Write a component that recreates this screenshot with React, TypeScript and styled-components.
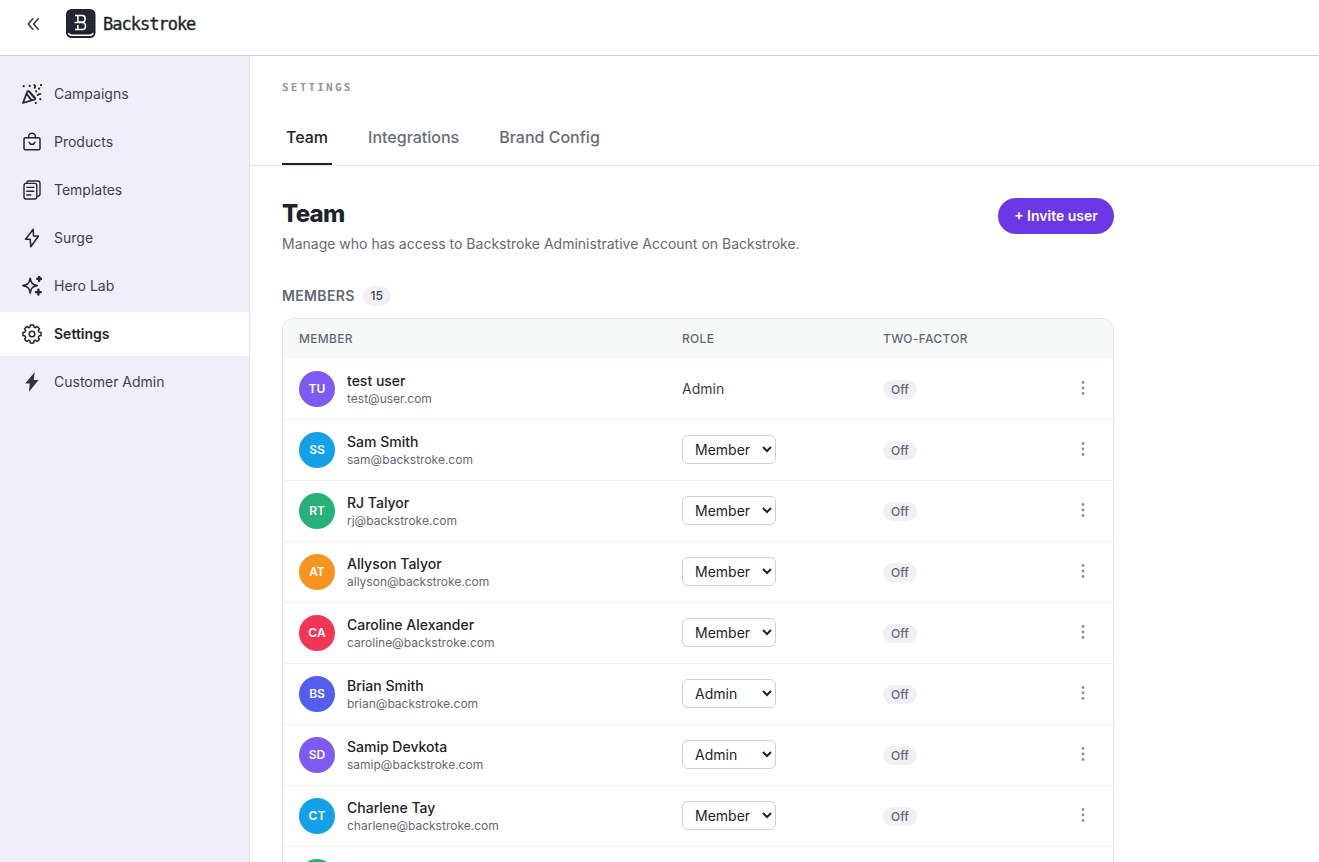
import React from "react";
import styled, { createGlobalStyle, css } from "styled-components";

const GlobalStyle = createGlobalStyle`
  *, *::before, *::after { box-sizing: border-box; }
  body {
    margin: 0;
    background: #fff;
    color: #1f232b;
    font-family: Inter, "Liberation Sans", sans-serif;
    font-size: 14px;
    line-height: 20px;
    -webkit-font-smoothing: antialiased;
  }
`;

const Shell = styled.div`
  display: flex;
  flex-direction: column;
  height: 100vh;
  overflow: hidden;
`;

const TopBar = styled.header`
  display: flex;
  align-items: flex-start;
  flex: none;
  height: 56px;
  padding: 9px 0 0 26px;
  border-bottom: 1px solid #d0d0d2;
`;

const CollapseButton = styled.button`
  display: flex;
  padding: 8px 0 0;
  margin-right: 26px;
  width: 14px;
  border: 0;
  background: none;
  color: #30363f;
`;

const BrandName = styled.span`
  margin-left: 7px;
  font-family: "DejaVu Sans Mono", monospace;
  font-size: 17px;
  line-height: 30px;
  letter-spacing: -1px;
  color: #1f242b;
  -webkit-text-stroke: 0.35px #1f242b;
`;

const Body = styled.div`
  display: flex;
  flex: 1;
  min-height: 0;
`;

const Sidebar = styled.nav`
  display: flex;
  flex-direction: column;
  flex: none;
  gap: 4px;
  width: 250px;
  padding-top: 16px;
  background: #f0eefa;
  border-right: 1px solid #e3e2ea;
`;

const NavItem = styled.a<{ $active?: boolean }>`
  display: flex;
  align-items: center;
  gap: 12px;
  height: 44px;
  padding-left: 22px;
  font-size: 14px;
  color: #3d434d;
  svg { flex: none; color: #23272e; }
  ${(p) =>
    p.$active &&
    css`
      background: #fff;
      color: #1f232b;
      font-weight: 600;
    `}
`;

const Main = styled.main`
  flex: 1;
  min-width: 0;
`;

const PageHead = styled.div`
  padding: 24px 32px 0;
  height: 110px;
  border-bottom: 1px solid #e2e3e6;
`;

const Eyebrow = styled.div`
  font: 700 11px/16px "DejaVu Sans Mono", monospace;
  letter-spacing: 2.2px;
  color: #9094a0;
`;

const Tabs = styled.div`
  display: flex;
  gap: 32px;
  margin-top: 14px;
`;

const Tab = styled.div<{ $active?: boolean }>`
  height: 55px;
  padding: 0 4px;
  font-size: 16px;
  font-weight: 500;
  line-height: 55px;
  color: ${(p) => (p.$active ? "#1f232b" : "#686c79")};
  border-bottom: 2px solid ${(p) => (p.$active ? "#1f232b" : "transparent")};
`;

const Content = styled.section`
  width: 832px;
  margin-left: 32px;
  padding-top: 32px;
`;

const TitleRow = styled.div`
  display: flex;
  justify-content: space-between;
  align-items: flex-start;
`;

const Title = styled.h1`
  margin: 0;
  font-size: 24px;
  font-weight: 800;
  line-height: 32px;
  letter-spacing: -0.7px;
`;

const Subtitle = styled.p`
  margin: 4px 0 0;
  color: #646875;
`;

const InviteButton = styled.button`
  width: 116px;
  height: 36px;
  padding: 0;
  border: 0;
  border-radius: 18px;
  background: #6c38e6;
  color: #fff;
  font: 600 14px/36px Inter, sans-serif;
`;

const SectionHead = styled.div`
  display: flex;
  align-items: center;
  gap: 8px;
  margin-top: 32px;
  font-size: 14px;
  font-weight: 600;
  letter-spacing: 0.35px;
  color: #646875;
`;

const Count = styled.span`
  min-width: 28px;
  border-radius: 10px;
  background: #f1f0f6;
  color: #3d434d;
  font-size: 12px;
  font-weight: 500;
  line-height: 20px;
  letter-spacing: 0;
  text-align: center;
`;

const Table = styled.div`
  margin-top: 12px;
  border: 1px solid #e0e2e7;
  border-radius: 12px;
  overflow: hidden;
`;

const Row = styled.div`
  display: grid;
  grid-template-columns: 383px 201px 1fr 28px;
  align-items: center;
  height: 61px;
  padding: 0 16px;
  border-bottom: 1px solid #eff0f3;
`;

const HeadRow = styled(Row)`
  height: 40px;
  border-bottom: 0;
  background: #f8f9f9;
  color: #646875;
  font-size: 12px;
  font-weight: 500;
  line-height: 16px;
  letter-spacing: 0.3px;
`;

const Person = styled.div`
  display: flex;
  align-items: center;
  gap: 12px;
`;

const Avatar = styled.span<{ $color: string }>`
  width: 36px;
  height: 36px;
  border-radius: 50%;
  background: ${(p) => p.$color};
  color: #fff;
  font-size: 12px;
  font-weight: 600;
  line-height: 36px;
  text-align: center;
`;

const PersonName = styled.div`
  font-size: 14px;
  font-weight: 500;
`;

const Email = styled.div`
  font-size: 12px;
  line-height: 16px;
  color: #646875;
`;

const RoleText = styled.span`
  color: #3d434d;
`;

const RoleSelect = styled.select`
  display: block;
  width: 94px;
  height: 29px;
  margin: 0 0 1px;
  padding: 0 4px 0 8px;
  border: 1px solid #ccced6;
  border-radius: 6px;
  background: #fff;
  color: #1f232b;
  font: 400 14px Inter, sans-serif;
`;

const Status = styled.span`
  display: inline-block;
  padding: 0 8px;
  border-radius: 10px;
  background: #f1f0f6;
  color: #646875;
  font-size: 12px;
  font-weight: 500;
  line-height: 19px;
  vertical-align: middle;
`;

const MenuButton = styled.button`
  display: flex;
  justify-content: center;
  width: 28px;
  padding: 0 0 2px;
  border: 0;
  background: none;
  color: #8b909a;
`;

const line = {
  fill: "none",
  stroke: "currentColor",
  strokeLinecap: "round",
  strokeLinejoin: "round",
} as const;

const Logo = () => (
  <svg width="30" height="30" viewBox="0 0 30 30" fill="none">
    <defs>
      <pattern id="grain" width="3" height="3" patternUnits="userSpaceOnUse">
        <circle cx="1" cy="1" r=".4" fill="#6a717d" />
      </pattern>
    </defs>
    <rect width="29.5" height="29" rx="5.5" fill="#1f232b" />
    <rect x="1" y="1" width="27.5" height="21" rx="4" fill="url(#grain)" />
    <path d="M2.4 24c.4 1.5 1.4 2.3 3.4 2.3h17.9c2 0 3-.8 3.4-2.3" stroke="#fff" strokeWidth="1.4" />
    <path
      d="M9 6.4h7.3c3.8 0 3.8 6.6 0 6.6h-4.4M11.9 6.4v6.6M8.6 13.4h7.7c4.2 0 4.2 7.2 0 7.2H9M11.9 16v4.6"
      stroke="#fff"
      strokeWidth="1.5"
    />
  </svg>
);

const PartyIcon = () => (
  <svg width="20" height="20" viewBox="0 0 20 20" {...line} strokeWidth="1.8">
    <path d="M1 19 5 8.2c.4-1.2 1.5-1.4 2.4-.5l5.4 5.8c.8.9.5 1.8-.6 2.2zM4.8 10l4.8 6.4M7.4 7.8l5 6" />
    <path d="M12.2 1c1.1.6 1.2 1.7.5 2.9M15.8 11.1c.5-1 1.3-1.3 2.6-1.2" />
    <path d="M1.7 2.2h.01M7.7 1.9h.01M19 1.2h.01M17 4.7h.01M14.2 7.4h.01M18.3 15.2h.01M13.8 18.9h.01" strokeWidth="2.2" />
  </svg>
);

const BagIcon = () => (
  <svg width="20" height="20" viewBox="0 0 20 20" {...line} strokeWidth="1.5">
    <rect x="2" y="5.8" width="16" height="12" rx="1.4" />
    <path d="M6.6 5.8V4.6a3.4 3.4 0 0 1 6.8 0v1.2M7.2 10.2a2.9 2.9 0 0 0 5.6 0" />
  </svg>
);

const PagesIcon = () => (
  <svg width="20" height="20" viewBox="0 0 20 20" {...line} strokeWidth="1.4">
    <rect x="2" y="3.4" width="12.8" height="15.6" rx="2" />
    <path d="M4.8 3.2V2.8C4.8 1.6 5.5 1 6.6 1h9.2c1.4 0 2.2.8 2.2 2.2V14c0 1.3-.7 2.1-2.1 2.1h-1M4.8 7.4h7M4.8 11.2h7M4.8 15h4" />
  </svg>
);

const BoltIcon = () => (
  <svg width="20" height="20" viewBox="0 0 20 20" {...line} strokeWidth="1.5">
    <path d="M11.2 1.2 3.5 11.2h4.7L8.8 18.8 16.5 8h-5z" />
  </svg>
);

const SolidBoltIcon = () => (
  <svg width="20" height="20" viewBox="0 0 20 20" fill="#30363f">
    <path d="M12.6.2 3.2 11.6h4.5L7 19.8l9.6-11.7h-4.8z" />
  </svg>
);

const SparkIcon = () => (
  <svg width="20" height="20" viewBox="0 0 20 20" {...line} strokeWidth="1.6">
    <path d="M8.2 2.2c.9 5 2.2 6.4 7 7.4-4.8 1-6.1 2.4-7 7.4-.9-5-2.2-6.4-7.4-7.4 5.2-1 6.5-2.4 7.4-7.4z" />
    <path d="M17.2.9v3.8M15.3 2.8h3.8M16.4 13.7v4.8M14 16.1h4.8" strokeWidth="2.4" />
  </svg>
);

const gearPath = (() => {
  const points: string[] = [];
  for (let i = 0; i < 8; i++) {
    const a = (i * Math.PI) / 4;
    const add = (r: number, off: number) =>
      points.push(`${(10 + r * Math.sin(a + off)).toFixed(2)} ${(10 - r * Math.cos(a + off)).toFixed(2)}`);
    add(7.2, -0.28);
    add(9.2, -0.17);
    add(9.2, 0.17);
    add(7.2, 0.28);
  }
  return `M${points.join("L")}z`;
})();

const GearIcon = () => (
  <svg width="20" height="20" viewBox="0 0 20 20" {...line} strokeWidth="1.5">
    <path d={gearPath} />
    <circle cx="10" cy="10" r="2.8" />
  </svg>
);

const nav = [
  { label: "Campaigns", icon: <PartyIcon /> },
  { label: "Products", icon: <BagIcon /> },
  { label: "Templates", icon: <PagesIcon /> },
  { label: "Surge", icon: <BoltIcon /> },
  { label: "Hero Lab", icon: <SparkIcon /> },
  { label: "Settings", icon: <GearIcon />, active: true },
  { label: "Customer Admin", icon: <SolidBoltIcon /> },
];

const members = [
  { initials: "TU", name: "test user", email: "test@user.com", role: "Admin", color: "#7f5af0", fixed: true },
  { initials: "SS", name: "Sam Smith", email: "sam@backstroke.com", role: "Member", color: "#14a0e6" },
  { initials: "RT", name: "RJ Talyor", email: "rj@backstroke.com", role: "Member", color: "#27b077" },
  { initials: "AT", name: "Allyson Talyor", email: "allyson@backstroke.com", role: "Member", color: "#f79420" },
  { initials: "CA", name: "Caroline Alexander", email: "caroline@backstroke.com", role: "Member", color: "#f43556" },
  { initials: "BS", name: "Brian Smith", email: "brian@backstroke.com", role: "Admin", color: "#515eee" },
  { initials: "SD", name: "Samip Devkota", email: "samip@backstroke.com", role: "Admin", color: "#7f5af0" },
  { initials: "CT", name: "Charlene Tay", email: "charlene@backstroke.com", role: "Member", color: "#14a0e6" },
  { initials: "", name: "", email: "", role: "", color: "#27b077" },
];

export default function App() {
  return (
    <Shell>
      <GlobalStyle />
      <TopBar>
        <CollapseButton aria-label="Collapse sidebar">
          <svg width="14" height="14" viewBox="0 0 14 14" {...line} strokeWidth="1.5">
            <path d="M6.8 1.8 2.2 7l4.6 5.2M12.2 1.8 7.6 7l4.6 5.2" />
          </svg>
        </CollapseButton>
        <Logo />
        <BrandName>Backstroke</BrandName>
      </TopBar>
      <Body>
        <Sidebar>
          {nav.map((item) => (
            <NavItem key={item.label} $active={item.active}>
              {item.icon}
              {item.label}
            </NavItem>
          ))}
        </Sidebar>
        <Main>
          <PageHead>
            <Eyebrow>SETTINGS</Eyebrow>
            <Tabs>
              <Tab $active>Team</Tab>
              <Tab>Integrations</Tab>
              <Tab>Brand Config</Tab>
            </Tabs>
          </PageHead>
          <Content>
            <TitleRow>
              <div>
                <Title>Team</Title>
                <Subtitle>Manage who has access to Backstroke Administrative Account on Backstroke.</Subtitle>
              </div>
              <InviteButton>+ Invite user</InviteButton>
            </TitleRow>
            <SectionHead>
              MEMBERS <Count>15</Count>
            </SectionHead>
            <Table>
              <HeadRow>
                <span>MEMBER</span>
                <span>ROLE</span>
                <span>TWO-FACTOR</span>
              </HeadRow>
              {members.map((m) => (
                <Row key={m.email}>
                  <Person>
                    <Avatar $color={m.color}>{m.initials}</Avatar>
                    <div>
                      <PersonName>{m.name}</PersonName>
                      <Email>{m.email}</Email>
                    </div>
                  </Person>
                  {m.name && (
                    <>
                      <div>
                        {m.fixed ? (
                          <RoleText>{m.role}</RoleText>
                        ) : (
                          <RoleSelect defaultValue={m.role}>
                            <option>Member</option>
                            <option>Admin</option>
                          </RoleSelect>
                        )}
                      </div>
                      <div>
                        <Status>Off</Status>
                      </div>
                      <MenuButton aria-label="More">
                        <svg width="4" height="16" viewBox="0 0 4 16" fill="currentColor">
                          <circle cx="2" cy="2.5" r="1.4" />
                          <circle cx="2" cy="8" r="1.4" />
                          <circle cx="2" cy="13.5" r="1.4" />
                        </svg>
                      </MenuButton>
                    </>
                  )}
                </Row>
              ))}
            </Table>
          </Content>
        </Main>
      </Body>
    </Shell>
  );
}
